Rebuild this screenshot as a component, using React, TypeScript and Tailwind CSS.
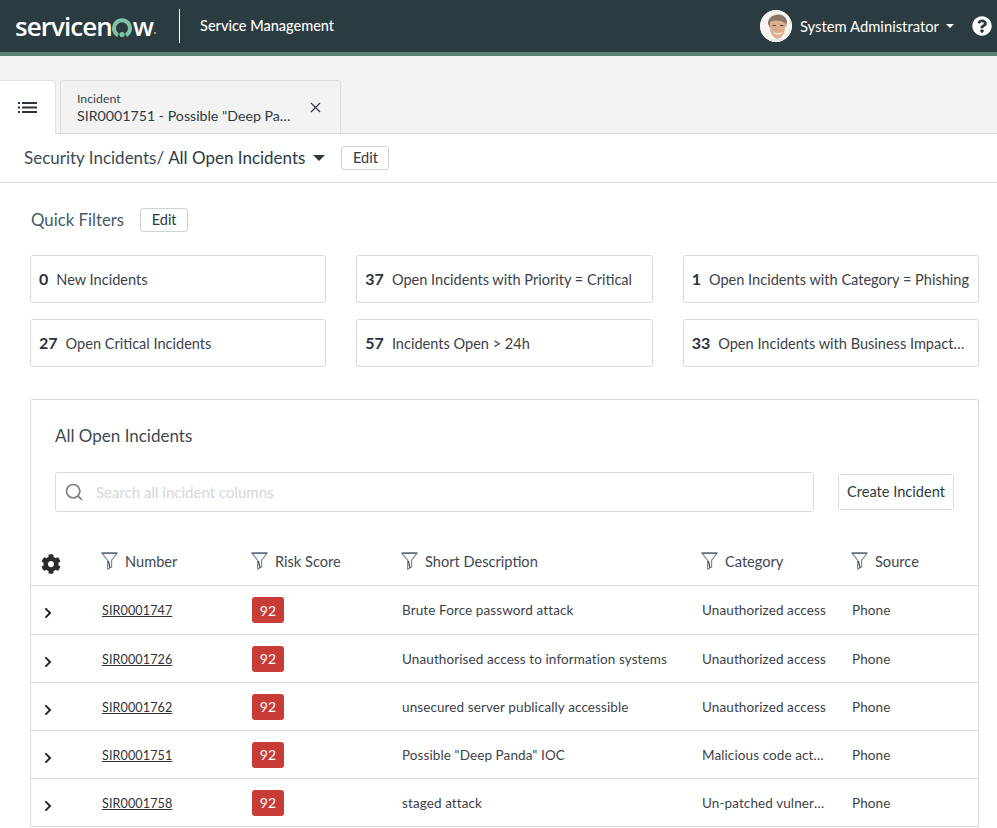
import React from "react";
import { FaCog, FaChevronRight, FaQuestionCircle } from "react-icons/fa";
import { Search, X } from "lucide-react";

const font = "font-['Lato','Noto_Sans',sans-serif]";

function Funnel() {
  return (
    <svg width="17" height="18" viewBox="0 0 17 18" fill="none" className="shrink-0">
      <path d="M0.8 1h15.4L10.6 8.2V15l-4 2.2V8.2L0.8 1z" stroke="#7f8c9a" strokeWidth="1.2" fill="#fff" />
      <path d="M7.4 9l1.6 7" stroke="#3f4a55" strokeWidth="1.2" />
      <path d="M1 1.2h15" stroke="#5f6f7e" strokeWidth="1.6" />
    </svg>
  );
}

function Avatar() {
  return (
    <svg width="32" height="32" viewBox="0 0 32 32" className="rounded-full bg-white">
      <circle cx="16" cy="16" r="16" fill="#f6f4f1" />
      <path d="M8 14C7 4 24 0 27 11l-1 7-1-5c-4-2-10-3-14-1l-1 6z" fill="#8a7664" />
      <path d="M10 12c4-2 10-2 15 1 1 8-2 15-7.5 16-6-1-8.5-9-7.5-17z" fill="#dcae8f" />
      <path d="M12.5 15.5h3.5M20 15.5h3.5" stroke="#5a4334" strokeWidth="1.1" />
      <path d="M13 21.5c3 2.5 7 2.5 10 0-2 4-8 4-10 0z" fill="#fff" />
      <path d="M7 32c2-3 6-4 10-3 4-1 7 0 9 3z" fill="#ebe8e4" />
    </svg>
  );
}

function Logo() {
  return (
    <div className="flex items-center text-white font-['Open_Sans',sans-serif] font-semibold text-[26px] tracking-[-0.95px] leading-none">
      <span>servicen</span>
      <svg width="20" height="20" viewBox="0 0 20 20" className="mx-[0.5px] mt-[3px] shrink-0">
        <path d="M6 17.2A8 8 0 1 1 14 17.2" fill="none" stroke="#7fc4a4" strokeWidth="4" />
        <circle cx="10" cy="16.5" r="2.6" fill="#7fc4a4" />
      </svg>
      <span>w</span>
      <span className="ml-[1px] mt-[14px] w-[2px] h-[2px] rounded-full bg-[#b9c4c4]"></span>
    </div>
  );
}

function EditBtn() {
  return (
    <button className="h-6 w-12 rounded-[3px] border border-[#cfd2d4] bg-white text-[14.5px] text-[#2e3a42] flex items-center justify-center">
      Edit
    </button>
  );
}

function Card({ n, label, narrow }: { n: string; label: string; narrow?: boolean }) {
  return (
    <div className="h-12 rounded-[3px] border border-[#d9dbdc] bg-white flex items-center px-2 min-w-0">
      <span className="text-[16px] font-bold text-[#2e3338] mr-2 shrink-0">{n}</span>
      <span className={`text-[14.55px] pt-[2px] text-[#3c4248] truncate ${narrow ? "pr-[2px]" : ""}`}>{label}</span>
    </div>
  );
}

const rows = [
  ["SIR0001747", "Brute Force password attack", "Unauthorized access"],
  ["SIR0001726", "Unauthorised access to information systems", "Unauthorized access"],
  ["SIR0001762", "unsecured server publically accessible", "Unauthorized access"],
  ["SIR0001751", 'Possible "Deep Panda" IOC', "Malicious code activity"],
  ["SIR0001758", "staged attack", "Un-patched vulnerability"],
];

function Head({ w, label }: { w: string; label: string }) {
  return (
    <div className={`${w} flex items-center gap-[7px] text-[14.6px] text-[#41484e]`}>
      <Funnel />
      <span>{label}</span>
    </div>
  );
}

export default function App() {
  return (
    <div className={`${font} h-[828px] w-[997px] overflow-hidden bg-white`}>
      <header className="h-[56px] bg-[#2b3c41] border-b-4 border-[#5b8371] flex items-center pl-[15px] pr-[5px]">
        <Logo />
        <div className="ml-[23px] w-px h-[34px] bg-white"></div>
        <div className="ml-[20px] text-white text-[14.5px] font-medium">Service Management</div>
        <div className="ml-auto flex items-center">
          <Avatar />
          <span className="ml-2 text-white text-[14.8px]">System Administrator</span>
          <span className="ml-[7px] w-0 h-0 border-x-[4px] border-x-transparent border-t-[4px] border-t-white"></span>
          <FaQuestionCircle className="ml-[18px] text-white" size={20} />
        </div>
      </header>

      <div className="h-[78px] bg-[#f2f2f2] border-b border-[#d9dbdc] flex items-end gap-1">
        <div className="relative -mb-px h-[54px] w-[56px] bg-white rounded-tr-[4px] border-r border-t border-[#e0e1e2] flex items-center justify-center">
          <svg width="19" height="11" viewBox="0 0 19 11" fill="#2b3338">
            <rect x="0" y="0" width="2" height="2" />
            <rect x="4" y="0" width="15" height="2" />
            <rect x="0" y="4.5" width="2" height="2" />
            <rect x="4" y="4.5" width="15" height="2" />
            <rect x="0" y="9" width="2" height="2" />
            <rect x="4" y="9" width="15" height="2" />
          </svg>
        </div>
        <div className="h-[53px] w-[281px] bg-[#f2f2f2] rounded-t-[4px] border border-b-0 border-[#dcdddd] flex items-center pl-4 pr-[16px] pt-1">
          <div className="flex-1 min-w-0">
            <div className="text-[12.3px] leading-[14px] text-[#3c4248]">Incident</div>
            <div className="text-[14.2px] leading-[20px] text-[#2e3a42] truncate w-[214px]">SIR0001751 - Possible "Deep Panda" IOC</div>
          </div>
          <X size={17} strokeWidth={1.6} className="text-[#2b3338] mb-[4px]" />
        </div>
      </div>

      <div className="h-[49px] border-b border-[#d9dbdc] flex items-center pl-6">
        <span className="text-[17px] text-[#3c4a52]">Security Incidents/ </span>
        <span className="text-[17px] text-[#2e3a42] ml-1">All Open Incidents</span>
        <span className="ml-2 w-0 h-0 border-x-[6px] border-x-transparent border-t-[6px] border-t-[#2e3a42]"></span>
        <div className="ml-4"><EditBtn /></div>
      </div>

      <div className="pl-[30px] pr-[18px]">
        <div className="flex items-center mt-[25px] h-6">
          <span className="text-[16.8px] text-[#46586a] ml-px">Quick Filters</span>
          <div className="ml-4"><EditBtn /></div>
        </div>

        <div className="grid grid-cols-3 gap-x-[30px] gap-y-4 mt-[23px]">
          <Card n="0" label="New Incidents" />
          <Card n="37" label="Open Incidents with Priority = Critical" />
          <Card n="1" label="Open Incidents with Category = Phishing" />
          <Card n="27" label="Open Critical Incidents" />
          <Card n="57" label="Incidents Open > 24h" />
          <Card n="33" label="Open Incidents with Business Impact = Critical" narrow />
        </div>

        <section className="mt-8 rounded-t-[3px] border border-b-0 border-[#d9dbdc]">
          <h2 className="mt-[26px] ml-6 text-[17px] leading-5 text-[#3c4a52]">All Open Incidents</h2>
          <div className="flex items-center mt-[26px] ml-6 mr-6">
            <div className="h-10 w-[759px] rounded-[3px] border border-[#d9dbdc] flex items-center pl-2">
              <Search size={20} strokeWidth={2} className="text-[#7b7f82]" />
              <span className="ml-3 text-[15px] text-[#d4d6d8]">Search all incident columns</span>
            </div>
            <button className="ml-[24px] h-9 w-[116px] rounded-[3px] border border-[#d9dbdc] text-[14.6px] text-[#2e3a42]">Create Incident</button>
          </div>

          <div className="flex items-center h-[73px] mt-px border-b border-[#d9dbdc] pt-[25px]">
            <div className="w-[70px] pl-[10px] pt-[4px]"><FaCog size={20} className="text-[#2b2b2b]" /></div>
            <Head w="w-[150px]" label="Number" />
            <Head w="w-[150px]" label="Risk Score" />
            <Head w="w-[300px]" label="Short Description" />
            <Head w="w-[150px]" label="Category" />
            <Head w="w-[120px]" label="Source" />
          </div>

          {rows.map((r, i) => {
            const t = i === 0 ? "pt-0" : "pt-[2px]";
            const num = i === 0 ? "pt-[2px]" : "pt-[4px]";
            return (
              <div key={r[0]} className={`flex items-center border-b border-[#d9dbdc] text-[13.5px] tracking-[0.1px] text-[#3c4248] ${i === 0 ? "h-[49px]" : "h-[48px]"}`}>
                <div className="w-[71px] pl-[11px] pt-[6px]"><FaChevronRight size={12} className="text-[#1f2326]" /></div>
                <a className={`w-[150px] ${num} underline text-[12.6px] text-[#2e3338]`}>{r[0]}</a>
                <div className="w-[150px]">
                  <span className="inline-flex h-[26px] w-8 items-center justify-center rounded-[3px] bg-[#c83c36] text-white text-[14px]">92</span>
                </div>
                <div className={`w-[300px] ${t} truncate pr-2`}>{r[1]}</div>
                <div className={`w-[150px] ${t} pr-[25px] truncate`}>{r[2]}</div>
                <div className={t}>Phone</div>
              </div>
            );
          })}
        </section>
      </div>
    </div>
  );
}
